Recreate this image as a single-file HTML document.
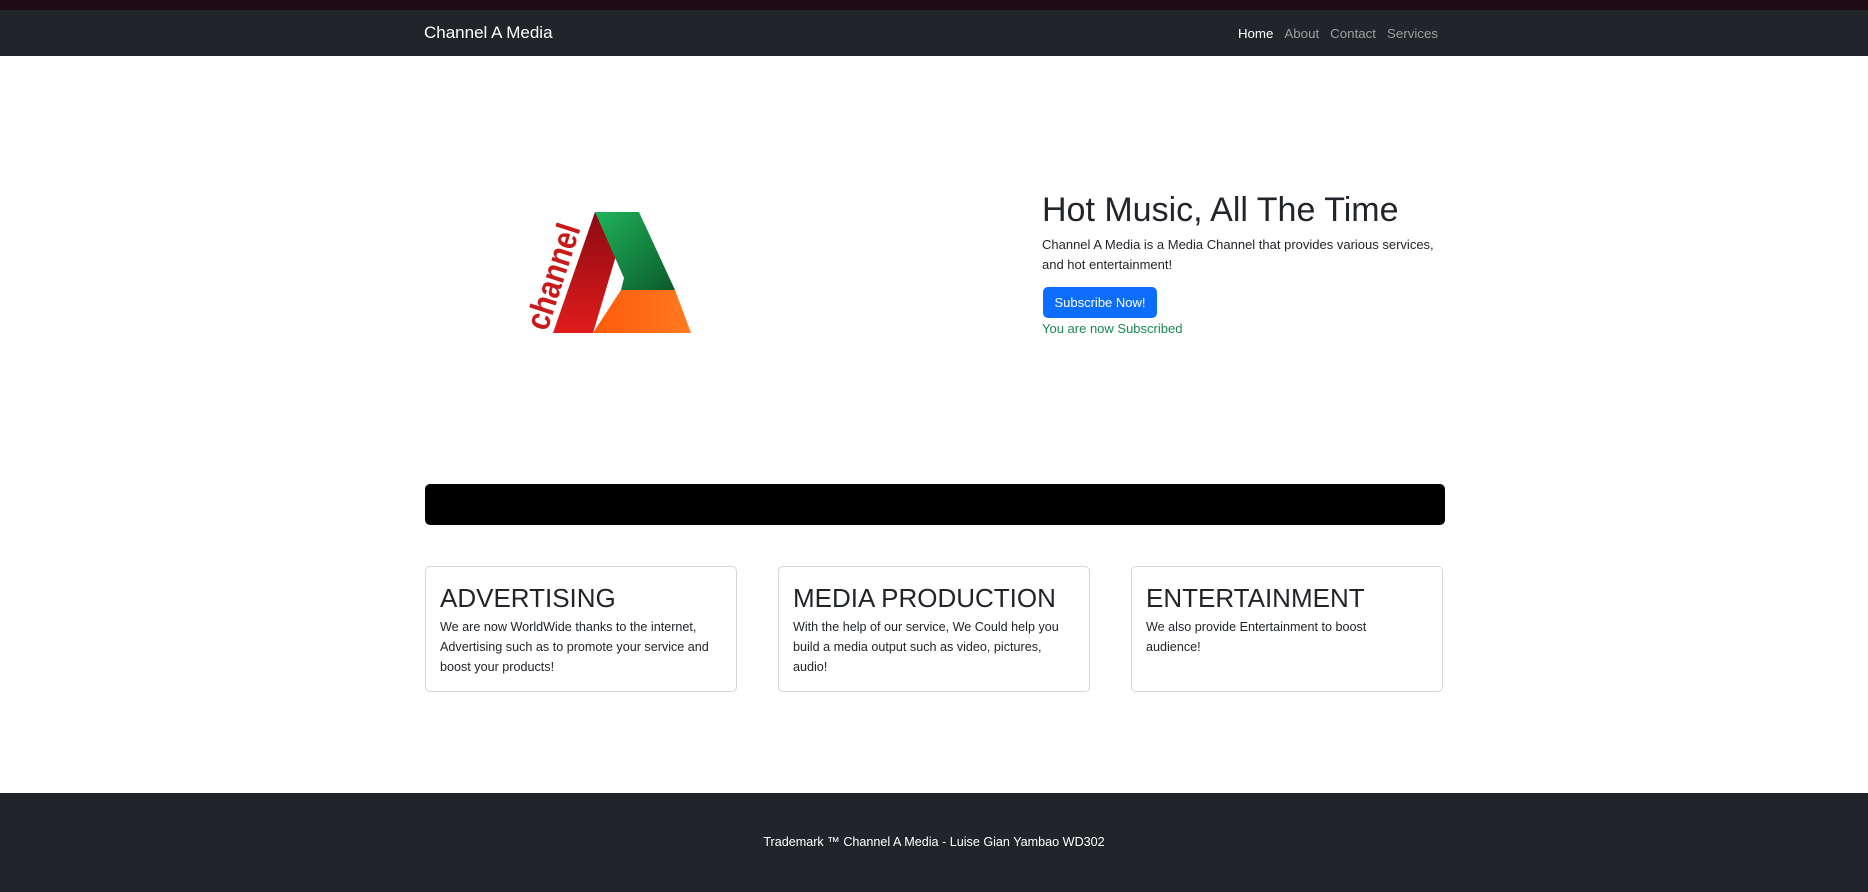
<!DOCTYPE html>
<html><head><meta charset="utf-8"><style>
*{box-sizing:border-box;margin:0;padding:0}
body{width:1868px;height:892px;overflow:hidden;background:#fff;font-family:"Liberation Sans","DejaVu Sans",sans-serif;color:#212529;position:relative}
.top{position:absolute;left:0;top:0;width:1868px;height:10px;background:#1f0b14}
.nav{position:absolute;left:0;top:10px;width:1868px;height:46px;background:#212529}
.brand{position:absolute;left:424px;top:13px;color:#fff;font-size:17px}
.links{position:absolute;right:430px;top:16px;font-size:13.3px;color:rgba(255,255,255,.55)}
.links span{margin-left:11px}
.links .a{color:#fff}
h1{position:absolute;left:1042px;top:191px;font-size:34px;font-weight:400;white-space:nowrap}
.desc{position:absolute;left:1042px;top:235px;width:410px;font-size:13px;line-height:20px}
.btn{position:absolute;left:1043px;top:287px;width:114px;height:31px;background:#0d6efd;color:#fff;border-radius:5px;font-size:13px;text-align:center;line-height:31px}
.sub{position:absolute;left:1042px;top:321px;font-size:13px;color:#198754}
.bar{position:absolute;left:425px;top:484px;width:1020px;height:41px;background:#000;border-radius:5px}
.card{position:absolute;top:566px;width:312px;height:126px;border:1px solid #d6d6d6;border-radius:5px;padding:0 14px}
.card h2{font-size:26px;font-weight:400;margin-top:16px;white-space:nowrap}
.card p{font-size:12.6px;line-height:20px;margin-top:3px;white-space:nowrap}
.foot{position:absolute;left:0;top:793px;width:1868px;height:99px;background:#212529;color:#fff;font-size:12.6px;text-align:center;line-height:99px}
</style></head><body>
<div class="top"></div>
<div class="nav"><div class="brand">Channel A Media</div>
<div class="links"><span class="a">Home</span><span>About</span><span>Contact</span><span>Services</span></div></div>
<svg style="position:absolute;left:505px;top:190px" width="210" height="150" viewBox="0 0 210 150">
<defs><linearGradient id="g" x1="0" y1="0" x2="1" y2="1"><stop offset="0" stop-color="#1fb35a"/><stop offset="1" stop-color="#0b5a2a"/></linearGradient>
<linearGradient id="r" x1="0" y1="0" x2="0" y2="1"><stop offset="0" stop-color="#8b0a12"/><stop offset="1" stop-color="#e01c1c"/></linearGradient>
<linearGradient id="o" x1="0" y1="0" x2="1" y2="0"><stop offset="0" stop-color="#ff5a0a"/><stop offset="1" stop-color="#ff7a20"/></linearGradient></defs>
<polygon points="90,22 124,22 88,143 48,143" fill="url(#r)"/>
<polygon points="90,22 134,22 170,100 116,100 119,88" fill="url(#g)"/>
<polygon points="116,100 170,100 186,143 88,143" fill="url(#o)"/>
<text x="0" y="0" transform="translate(42,142) rotate(-72) scale(0.85,1)" font-family="Liberation Sans,sans-serif" font-weight="700" font-size="34" fill="#c81a1a">channel</text>
</svg>
<h1>Hot Music, All The Time</h1>
<div class="desc">Channel A Media is a Media Channel that provides various services, and hot entertainment!</div>
<div class="btn">Subscribe Now!</div>
<div class="sub">You are now Subscribed</div>
<div class="bar"></div>
<div class="card" style="left:425px"><h2>ADVERTISING</h2><p>We are now WorldWide thanks to the internet,<br>Advertising such as to promote your service and<br>boost your products!</p></div>
<div class="card" style="left:778px"><h2>MEDIA PRODUCTION</h2><p>With the help of our service, We Could help you<br>build a media output such as video, pictures,<br>audio!</p></div>
<div class="card" style="left:1131px"><h2>ENTERTAINMENT</h2><p>We also provide Entertainment to boost<br>audience!</p></div>
<div class="foot">Trademark ™ Channel A Media - Luise Gian Yambao WD302</div>
</body></html>
